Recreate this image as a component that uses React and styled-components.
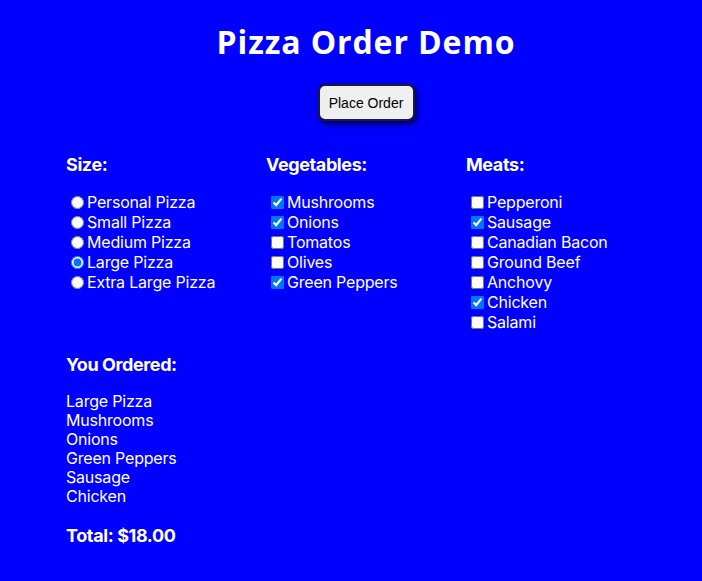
import React, { useState } from "react";
import styled, { createGlobalStyle } from "styled-components";

const GlobalStyle = createGlobalStyle`
  body {
    margin: 0;
    background: #0000ff;
    color: #ffffff;
    font-family: Inter, "Liberation Sans", sans-serif;
  }
`;

const SIZES = [
  { name: "Personal Pizza", price: 8 },
  { name: "Small Pizza", price: 10 },
  { name: "Medium Pizza", price: 12 },
  { name: "Large Pizza", price: 14 },
  { name: "Extra Large Pizza", price: 16 },
];

const VEGGIES = ["Mushrooms", "Onions", "Tomatos", "Olives", "Green Peppers"];
const MEATS = [
  "Pepperoni",
  "Sausage",
  "Canadian Bacon",
  "Ground Beef",
  "Anchovy",
  "Chicken",
  "Salami",
];

const App = () => {
  const [size, setSize] = useState("Large Pizza");
  const [veggies, setVeggies] = useState(["Mushrooms", "Onions", "Green Peppers"]);
  const [meats, setMeats] = useState(["Sausage", "Chicken"]);

  const toggle = (list, setList, item) =>
    setList(list.includes(item) ? list.filter((i) => i !== item) : [...list, item]);

  const ordered = [
    size,
    ...VEGGIES.filter((v) => veggies.includes(v)),
    ...MEATS.filter((m) => meats.includes(m)),
  ];

  return (
    <Page>
      <GlobalStyle />
      <Title>Pizza Order Demo</Title>
      <ButtonRow>
        <OrderButton>Place Order</OrderButton>
      </ButtonRow>
      <Columns>
        <Column>
          <Heading>Size:</Heading>
          <OptionList>
            {SIZES.map((s) => (
              <Option key={s.name}>
                <input
                  type="radio"
                  name="size"
                  checked={size === s.name}
                  onChange={() => setSize(s.name)}
                />
                {s.name}
              </Option>
            ))}
          </OptionList>
        </Column>
        <Column>
          <Heading>Vegetables:</Heading>
          <OptionList>
            {VEGGIES.map((v) => (
              <Option key={v}>
                <input
                  type="checkbox"
                  checked={veggies.includes(v)}
                  onChange={() => toggle(veggies, setVeggies, v)}
                />
                {v}
              </Option>
            ))}
          </OptionList>
        </Column>
        <Column>
          <Heading>Meats:</Heading>
          <OptionList>
            {MEATS.map((m) => (
              <Option key={m}>
                <input
                  type="checkbox"
                  checked={meats.includes(m)}
                  onChange={() => toggle(meats, setMeats, m)}
                />
                {m}
              </Option>
            ))}
          </OptionList>
        </Column>
      </Columns>
      <Summary>
        <Heading>You Ordered:</Heading>
        <OrderList>
          {ordered.map((item) => (
            <li key={item}>{item}</li>
          ))}
        </OrderList>
        <Total>Total: $18.00</Total>
      </Summary>
    </Page>
  );
};

export default App;

const Page = styled.main`
  width: 600px;
  margin-left: 66px;
  padding-top: 22px;
  padding-bottom: 20px;
`;

const Title = styled.h1`
  margin: 0;
  text-align: center;
  font-family: "Open Sans", "DejaVu Sans", sans-serif;
  font-size: 32px;
  font-weight: 700;
  letter-spacing: 0.9px;
  line-height: 40px;
`;

const ButtonRow = styled.div`
  display: flex;
  justify-content: center;
  margin-top: 22px;
`;

const OrderButton = styled.button`
  width: 97px;
  height: 37px;
  padding: 0;
  border: 2px solid #1a1a3a;
  border-radius: 7px;
  background: #efefef;
  color: #000;
  font-family: "Liberation Sans", Arial, sans-serif;
  font-size: 14px;
  box-shadow: 2px 3px 6px rgba(0, 0, 40, 0.8);
  cursor: pointer;
`;

const Columns = styled.div`
  display: grid;
  grid-template-columns: repeat(3, 200px);
  margin-top: 32px;
`;

const Column = styled.section``;

const Heading = styled.h3`
  margin: 0;
  font-family: Inter, "Liberation Sans", sans-serif;
  font-size: 18px;
  font-weight: 700;
  letter-spacing: -0.4px;
  line-height: 24px;
`;

const OptionList = styled.div`
  display: flex;
  flex-direction: column;
  margin-top: 15px;
  padding-left: 3px;
`;

const Option = styled.label`
  display: flex;
  align-items: center;
  height: 20px;
  font-size: 16px;
  letter-spacing: -0.2px;
  line-height: 20px;

  input {
    margin: 0 3px 0 2px;
    width: 13px;
    height: 13px;
  }
`;

const Summary = styled.section`
  margin-top: 21px;
`;

const OrderList = styled.ul`
  list-style: none;
  margin: 15px 0 0;
  padding: 0;
  font-size: 16px;
  letter-spacing: -0.2px;
  line-height: 19px;
`;

const Total = styled.div`
  margin-top: 18px;
  font-size: 18px;
  font-weight: 700;
  letter-spacing: -0.4px;
  line-height: 24px;
`;
